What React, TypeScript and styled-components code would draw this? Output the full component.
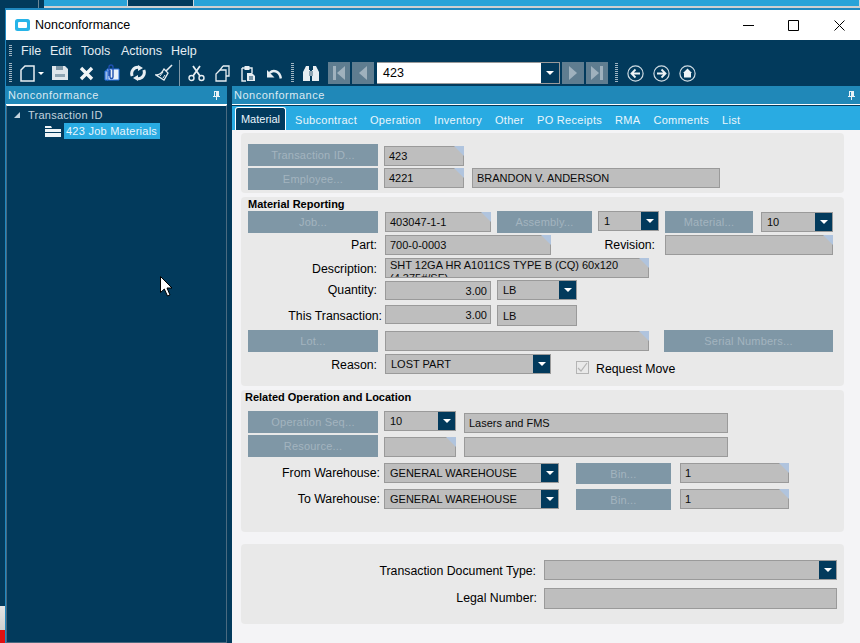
import React from "react";
import styled, { createGlobalStyle } from "styled-components";

const GlobalStyle = createGlobalStyle`
  html, body {
    margin: 0;
    padding: 0;
    background: #fff;
    font-family: "Liberation Sans", Arial, sans-serif;
    overflow: hidden;
  }
`;

const NAVY = "#023a5c";

const Page = styled.div`
  width: 860px;
  height: 643px;
  overflow: hidden;
  display: flex;
  flex-direction: column;
  background: ${NAVY};
`;

// bits of the window behind this one
const BackStrip = styled.div`
  height: 8px;
  display: flex;
  padding-left: 38px;
  flex: none;
`;
const BackTab = styled.div<{ $w?: number; $tone: "line" | "dark" | "blue" }>`
  box-sizing: border-box;
  height: ${(p) => (p.$tone === "line" ? 8 : 6)}px;
  background: ${(p) => (p.$tone === "line" ? "#6d8796" : p.$tone === "dark" ? NAVY : "#29a3d8")};
  width: ${(p) => (p.$w ? `${p.$w}px` : "auto")};
  flex: ${(p) => (p.$w ? "none" : 1)};
  border-right: ${(p) => (p.$tone === "line" ? "none" : "1px solid #cfd8de")};
`;
const BackTabs = styled.div`
  flex: 1;
  display: flex;
  margin-left: 5px;
  height: 8px;
  background: #d0d0d0;
`;

const Body = styled.div`
  flex: 1;
  display: flex;
  min-height: 0;
`;
const BackSide = styled.div`
  width: 5px;
  flex: none;
  display: flex;
  flex-direction: column;
`;
const SideChunk = styled.div<{ $tone: "gray" | "red" }>`
  height: ${(p) => (p.$tone === "gray" ? 24 : 13)}px;
  flex: none;
  background: ${(p) => (p.$tone === "gray" ? "linear-gradient(#e4e4e4, #cfcfcf)" : "#e01010")};
`;
const SideFill = styled.div`
  flex: 1;
  background: ${NAVY};
`;

const Win = styled.div`
  flex: 1;
  display: flex;
  flex-direction: column;
  min-height: 0;
  min-width: 0;
  background: #fff;
  border-left: 1px solid #2088c0;
  border-top: 2px solid #2088c0;
`;

const TitleBar = styled.div`
  height: 30px;
  flex: none;
  display: flex;
  align-items: center;
  padding-left: 9px;
  background: #fff;
  font-size: 12.5px;
  color: #000;
`;
const TitleText = styled.span`
  margin-left: 5px;
  flex: 1;
`;
const WinBtn = styled.div<{ $w: number }>`
  width: ${(p) => p.$w}px;
  height: 30px;
  display: flex;
  align-items: center;
  justify-content: center;
`;

const MenuBar = styled.div`
  height: 20px;
  flex: none;
  box-sizing: border-box;
  padding: 1px 0 0 3px;
  background: ${NAVY};
  display: flex;
  align-items: center;
  font-size: 12.5px;
  color: #e4edf3;
`;
const Grip = styled.div<{ $h: number; $mr: number; $ml?: number }>`
  width: 3px;
  height: ${(p) => p.$h}px;
  margin-right: ${(p) => p.$mr}px;
  margin-left: ${(p) => p.$ml ?? 0}px;
  flex: none;
  background: repeating-linear-gradient(to bottom, #9fb4c2 0 1px, transparent 1px 2px);
`;
const MenuItem = styled.span<{ $w: number }>`
  width: ${(p) => p.$w}px;
`;

const ToolBar = styled.div`
  height: 26px;
  flex: none;
  background: ${NAVY};
  display: flex;
  align-items: center;
  padding-left: 3px;
`;
const ToolIcon = styled.div<{ $w?: number; $mr?: number }>`
  width: ${(p) => p.$w ?? 26}px;
  height: 22px;
  margin-right: ${(p) => p.$mr ?? 0}px;
  flex: none;
  display: flex;
  align-items: center;
  justify-content: center;
`;
const ToolSep = styled.div`
  width: 1px;
  height: 26px;
  background: #7f97a6;
  margin: 0 3px 0 2px;
  flex: none;
`;
const NavBtn = styled.div`
  width: 22px;
  height: 22px;
  margin-right: 2px;
  flex: none;
  background: #5f7d90;
  display: flex;
  align-items: center;
  justify-content: center;
`;
const NavBox = styled.div`
  width: 183px;
  height: 22px;
  box-sizing: border-box;
  margin: 0 2px 0 1px;
  border: 1px solid #9a9a9a;
  border-left: none;
  background: #fff;
  display: flex;
  flex: none;
  font-size: 12.5px;
  color: #000;
  align-items: center;
  padding-left: 6px;
`;
const NavText = styled.span`
  flex: 1;
`;
const NavArrow = styled.div`
  width: 18px;
  height: 20px;
  background: ${NAVY};
  display: flex;
  align-items: center;
  justify-content: center;
`;
const Caret = styled.span<{ $s?: number }>`
  width: 0;
  height: 0;
  border-left: ${(p) => p.$s ?? 4}px solid transparent;
  border-right: ${(p) => p.$s ?? 4}px solid transparent;
  border-top: ${(p) => p.$s ?? 4}px solid #fff;
`;

const Split = styled.div`
  flex: 1;
  display: flex;
  min-height: 0;
  background: ${NAVY};
`;
const LeftPane = styled.div`
  width: 221px;
  flex: none;
  display: flex;
  flex-direction: column;
  position: relative;
`;
const Splitter = styled.div`
  width: 5px;
  flex: none;
  background: ${NAVY};
`;
const RightPane = styled.div`
  flex: 1;
  display: flex;
  flex-direction: column;
  min-width: 0;
`;
const PaneHead = styled.div<{ $pr: number }>`
  height: 19px;
  flex: none;
  box-sizing: border-box;
  background: #2088b8;
  display: flex;
  align-items: center;
  justify-content: space-between;
  padding: 0 ${(p) => p.$pr}px 0 2px;
  font-size: 11px;
  letter-spacing: 0.5px;
  color: #dceaf2;
  border-bottom: 1px solid #fff;
`;
const Tree = styled.div`
  flex: 1;
  background: ${NAVY};
  border: 1px solid #4a6a80;
  border-top-color: #fff;
  padding-top: 1px;
  font-size: 11px;
  letter-spacing: 0.25px;
  color: #c3d3de;
`;
const TreeRow = styled.div<{ $indent: number }>`
  display: flex;
  align-items: center;
  height: 16px;
  padding-left: ${(p) => p.$indent}px;
`;
const TreeArrow = styled.span`
  width: 0;
  height: 0;
  border-left: 6px solid transparent;
  border-bottom: 6px solid #c3d3de;
  margin-right: 8px;
`;
const TreeSelected = styled.span`
  background: #29abe2;
  color: #e8f4fb;
  height: 16px;
  line-height: 16px;
  padding: 0 3px 0 2px;
  margin-left: 3px;
`;
const PointerOverlay = styled.div`
  position: absolute;
  left: 154px;
  top: 190px;
  line-height: 0;
`;

const TabBar = styled.div`
  height: 24px;
  margin-top: 1px;
  flex: none;
  background: #29abe2;
  display: flex;
  align-items: flex-end;
  padding-left: 3px;
  font-size: 11px;
  letter-spacing: 0.3px;
  color: #eaf6fc;
`;
const ActiveTab = styled.div`
  width: 51px;
  height: 23px;
  margin-right: 9px;
  flex: none;
  box-sizing: border-box;
  display: flex;
  align-items: center;
  justify-content: center;
  background: ${NAVY};
  border: 1px solid #fff;
  border-bottom: none;
  border-radius: 3px 3px 0 0;
  letter-spacing: 0;
`;
const Tab = styled.div`
  height: 20px;
  margin-right: 13px;
  padding-bottom: 1px;
  box-sizing: border-box;
  display: flex;
  align-items: center;
`;

const Content = styled.div`
  flex: 1;
  background: #f4f4f6;
  padding: 3px 16px 0 9px;
  display: flex;
  flex-direction: column;
  font-size: 12.3px;
  color: #000;
  min-height: 0;
`;
const Card = styled.div<{ $h: number; $mt: number }>`
  height: ${(p) => p.$h}px;
  margin-top: ${(p) => p.$mt}px;
  flex: none;
  box-sizing: border-box;
  background: #e9e9e9;
  border-radius: 4px;
  padding-left: 7px;
`;
const CardTitle = styled.div<{ $ml?: number }>`
  font-weight: bold;
  font-size: 11px;
  height: 14px;
  line-height: 14px;
  margin-left: ${(p) => p.$ml ?? 0}px;
`;
const Row = styled.div<{ $h: number; $mt?: number }>`
  display: flex;
  align-items: flex-start;
  height: ${(p) => p.$h}px;
  margin-top: ${(p) => p.$mt ?? 0}px;
`;
const ActionBtn = styled.div<{ $w: number; $ml?: number; $h?: number }>`
  width: ${(p) => p.$w}px;
  height: ${(p) => p.$h ?? 22}px;
  margin-left: ${(p) => p.$ml ?? 0}px;
  flex: none;
  background: #7f97a6;
  color: #a3b4bf;
  font-size: 11px;
  letter-spacing: 0.2px;
  display: flex;
  align-items: center;
  justify-content: center;
`;
const Field = styled.div<{
  $w: number;
  $ml?: number;
  $dy?: number;
  $h?: number;
  $corner?: boolean;
  $right?: boolean;
  $pad?: number;
}>`
  position: relative;
  width: ${(p) => p.$w}px;
  height: ${(p) => p.$h ?? 20}px;
  margin-left: ${(p) => p.$ml ?? 0}px;
  margin-top: ${(p) => p.$dy ?? 0}px;
  flex: none;
  box-sizing: border-box;
  background: #bebebe;
  border: 1px solid #9a9a9a;
  display: flex;
  align-items: center;
  justify-content: ${(p) => (p.$right ? "flex-end" : "flex-start")};
  padding: ${(p) => (p.$right ? "0 3px 0 0" : `0 0 0 ${p.$pad ?? 4}px`)};
  font-size: 11px;
  color: #0a0a0a;
  white-space: nowrap;
  &::after {
    content: "";
    display: ${(p) => (p.$corner ? "block" : "none")};
    position: absolute;
    top: -1px;
    right: -1px;
    width: 10px;
    height: 10px;
    background: #b0c4de;
    clip-path: polygon(0 0, 100% 0, 100% 100%);
  }
`;
const ClippedText = styled.div`
  height: 18px;
  overflow: hidden;
  white-space: normal;
  line-height: 12.5px;
  align-self: flex-start;
`;
const FieldText = styled.span`
  flex: 1;
`;
const ComboBtn = styled.div`
  width: 17px;
  height: 18px;
  flex: none;
  background: ${NAVY};
  display: flex;
  align-items: center;
  justify-content: center;
`;
const Label = styled.div<{ $w: number; $dy?: number }>`
  width: ${(p) => p.$w}px;
  flex: none;
  text-align: right;
  margin-top: ${(p) => p.$dy ?? 2}px;
  line-height: 16px;
  white-space: nowrap;
`;
const CheckBox = styled.div`
  width: 11px;
  height: 11px;
  margin: 7px 0 0 25px;
  border: 1px solid #b4b4b4;
  flex: none;
  display: flex;
  align-items: center;
  justify-content: center;
`;
const CheckLabel = styled.div`
  margin: 7px 0 0 7px;
  line-height: 16px;
`;

const W = "#e8eef2";

const NewIcon = () => (
  <svg width="15" height="17" viewBox="0 0 15 17">
    <path d="M5 1h9v15H1V5z" fill="none" stroke={W} strokeWidth="1.5" />
  </svg>
);
const SaveIcon = () => (
  <svg width="16" height="16" viewBox="0 0 16 16">
    <path d="M0 1h13l3 3v11H0z" fill="#dfe6eb" />
    <path d="M4 1h7v4H4z" fill="#7f97a6" />
    <path d="M3 9h10v3H3z" fill="#8fa5b3" />
  </svg>
);
const CloseIcon = () => (
  <svg width="15" height="15" viewBox="0 0 15 15">
    <path d="M2 2l11 11M13 2L2 13" stroke="#f0f4f6" strokeWidth="3.4" />
  </svg>
);
const ActionsIcon = () => (
  <svg width="16" height="18" viewBox="0 0 16 18">
    <path d="M3 5h12v11H3z" fill="#e9f0fa" stroke="#2a72e4" />
    <path d="M1 7h3v9H1z" fill="#9bb9e4" stroke="#2a72e4" />
    <path d="M5 12V3a2 2 0 0 1 4 0v10a1.5 1.5 0 0 1-3 0V6" fill="none" stroke="#1f4fb0" strokeWidth="1.4" />
  </svg>
);
const RefreshIcon = () => (
  <svg width="16" height="16" viewBox="0 0 16 16">
    <path d="M2.2 11A6.2 6.2 0 0 1 8.500 2.400" fill="none" stroke={W} strokeWidth="3" />
    <path d="M13.800 5A6.200 6.200 0 0 1 7.500 13.600" fill="none" stroke={W} strokeWidth="3" />
    <path d="M8 0l5 3-5 3zM8 10v6l-5-3z" fill={W} />
  </svg>
);
const BroomIcon = () => (
  <svg width="18" height="18" viewBox="0 0 18 18">
    <path d="M17 1l-6 6" stroke={W} strokeWidth="1.6" />
    <path d="M9 5l4 4-4 7-8-5c3 0 6-2 8-6z" fill="none" stroke={W} strokeWidth="1.3" />
    <path d="M5 12l3-4M8 14l2-3" stroke={W} />
  </svg>
);
const CutIcon = () => (
  <svg width="17" height="17" viewBox="0 0 17 17">
    <circle cx="3.5" cy="13" r="2.5" fill="none" stroke={W} strokeWidth="1.4" />
    <circle cx="13.5" cy="13" r="2.5" fill="none" stroke={W} strokeWidth="1.4" />
    <path d="M5 11L12 1M12 11L5 1" stroke={W} strokeWidth="1.8" />
  </svg>
);
const CopyIcon = () => (
  <svg width="15" height="17" viewBox="0 0 15 17">
    <path d="M8 1h6v10H11" fill="none" stroke={W} strokeWidth="1.3" />
    <path d="M5 5h6v11H1V9z" fill="none" stroke={W} strokeWidth="1.3" />
    <path d="M8 1L5 5" stroke={W} strokeWidth="1.3" />
  </svg>
);
const PasteIcon = () => (
  <svg width="15" height="17" viewBox="0 0 15 17">
    <path d="M1 3h10v5M5 16H1V3" fill="none" stroke={W} strokeWidth="1.4" />
    <path d="M3.5 1h5v4h-5z" fill={W} />
    <path d="M6 8h5l3 3v5H6z" fill={W} />
    <path d="M8 12h4M8 14h4" stroke={NAVY} />
  </svg>
);
const UndoIcon = () => (
  <svg width="16" height="12" viewBox="0 0 16 12">
    <path d="M14.800 11.500C14 5 8 1.500 3.500 6" fill="none" stroke={W} strokeWidth="2.4" />
    <path d="M1 3v7.500h7.500z" fill={W} />
  </svg>
);
const BinocIcon = () => (
  <svg width="16" height="15" viewBox="0 0 16 15">
    <path d="M3 0h3v4h1v11H0V6zM13 0h-3v4H9v11h7V6z" fill={W} />
    <path d="M6 5h4v5H6z" fill="#8fa5b3" />
  </svg>
);
const NavGlyph = ({ dir, bar }: { dir: "l" | "r"; bar?: boolean }) => (
  <svg width="14" height="14" viewBox="0 0 14 14">
    {dir === "l" ? (
      <>
        {bar && <path d="M1 0h3v14H1z" fill="#9fb1bd" />}
        <path d={bar ? "M13 0v14L5 7z" : "M11 0v14L3 7z"} fill="#9fb1bd" />
      </>
    ) : (
      <>
        {bar && <path d="M10 0h3v14h-3z" fill="#9fb1bd" />}
        <path d={bar ? "M1 0v14l8-7z" : "M3 0v14l8-7z"} fill="#9fb1bd" />
      </>
    )}
  </svg>
);
const CircleArrow = ({ flip }: { flip?: boolean }) => (
  <svg width="17" height="17" viewBox="0 0 17 17" style={flip ? { transform: "scaleX(-1)" } : undefined}>
    <circle cx="8.500" cy="8.500" r="7.600" fill="none" stroke="#cfdbe3" strokeWidth="1.2" />
    <path d="M13 8.500H5M8.500 4.500l-4 4 4 4" fill="none" stroke="#eef3f6" strokeWidth="1.800" />
  </svg>
);
const HomeIcon = () => (
  <svg width="17" height="17" viewBox="0 0 17 17">
    <circle cx="8.500" cy="8.500" r="7.600" fill="none" stroke="#cfdbe3" strokeWidth="1.2" />
    <path d="M8.500 3.500L13 8h-1v4.500H5V8H4z" fill="#eef3f6" />
  </svg>
);
const PinIcon = () => (
  <svg width="7" height="9" viewBox="0 0 7 9">
    <path d="M1 0h5v5h1v1H4v3H3V6H0V5h1zM2 1v4h1V1z" fill="#e8f2f7" />
  </svg>
);
const AppLogo = () => (
  <svg width="15" height="12" viewBox="0 0 15 12">
    <rect width="15" height="12" rx="2.500" fill="#27b4e8" />
    <rect x="3" y="3" width="9" height="6" rx="1" fill="#fff" />
  </svg>
);
const FolderIcon = () => (
  <svg width="16" height="11" viewBox="0 0 16 11">
    <path d="M0 2V0h6l1 2z" fill="#eef3f6" />
    <path d="M0 3h16v3H0zM0 7h16v4H0z" fill="#eef3f6" />
  </svg>
);
const Pointer = () => (
  <svg width="13" height="22" viewBox="0 0 13 22">
    <path d="M.5.500V16.500L4.300 13l3.200 7 2.500-1-3-7H12z" fill="#fff" stroke="#000" />
  </svg>
);
const MinimizeGlyph = () => (
  <svg width="11" height="11" viewBox="0 0 11 11">
    <path d="M0 5.500h11" stroke="#000" />
  </svg>
);
const MaximizeGlyph = () => (
  <svg width="11" height="11" viewBox="0 0 11 11">
    <path d="M.5.500h10v10H.5z" fill="none" stroke="#000" />
  </svg>
);
const CloseGlyph = () => (
  <svg width="11" height="11" viewBox="0 0 11 11">
    <path d="M.5.500l10 10M10.500.500l-10 10" stroke="#000" />
  </svg>
);

const Combo = ({ children, ...rest }: React.ComponentProps<typeof Field>) => (
  <Field $pad={5} {...rest}>
    <FieldText>{children}</FieldText>
    <ComboBtn>
      <Caret />
    </ComboBtn>
  </Field>
);

const tabs = ["Subcontract", "Operation", "Inventory", "Other", "PO Receipts", "RMA", "Comments", "List"];

export default function App() {
  return (
    <Page>
      <GlobalStyle />
      <BackStrip>
        <BackTab $w={1} $tone="line" />
        <BackTabs>
          <BackTab $w={84} $tone="blue" />
          <BackTab $w={66} $tone="dark" />
          <BackTab $tone="blue" />
        </BackTabs>
      </BackStrip>
      <Body>
        <BackSide>
          <SideFill />
          <SideChunk $tone="gray" />
          <SideChunk $tone="red" />
        </BackSide>
        <Win>
          <TitleBar>
            <AppLogo />
            <TitleText>Nonconformance</TitleText>
            <WinBtn $w={40}><MinimizeGlyph /></WinBtn>
            <WinBtn $w={50}><MaximizeGlyph /></WinBtn>
            <WinBtn $w={42}><CloseGlyph /></WinBtn>
          </TitleBar>
          <MenuBar>
            <Grip $h={12} $mr={9} />
            <MenuItem $w={29}>File</MenuItem>
            <MenuItem $w={31}>Edit</MenuItem>
            <MenuItem $w={40}>Tools</MenuItem>
            <MenuItem $w={50}>Actions</MenuItem>
            <MenuItem $w={30}>Help</MenuItem>
          </MenuBar>
          <ToolBar>
            <Grip $h={20} $mr={8} />
            <ToolIcon $w={15}><NewIcon /></ToolIcon>
            <ToolIcon $w={12}><Caret $s={3} /></ToolIcon>
            <ToolIcon><SaveIcon /></ToolIcon>
            <ToolIcon><CloseIcon /></ToolIcon>
            <ToolIcon><ActionsIcon /></ToolIcon>
            <ToolIcon><RefreshIcon /></ToolIcon>
            <ToolIcon><BroomIcon /></ToolIcon>
            <ToolSep />
            <ToolIcon><CutIcon /></ToolIcon>
            <ToolIcon><CopyIcon /></ToolIcon>
            <ToolIcon><PasteIcon /></ToolIcon>
            <ToolIcon><UndoIcon /></ToolIcon>
            <Grip $h={20} $mr={4} $ml={4} />
            <ToolIcon $mr={4}><BinocIcon /></ToolIcon>
            <NavBtn><NavGlyph dir="l" bar /></NavBtn>
            <NavBtn><NavGlyph dir="l" /></NavBtn>
            <NavBox>
              <NavText>423</NavText>
              <NavArrow><Caret /></NavArrow>
            </NavBox>
            <NavBtn><NavGlyph dir="r" /></NavBtn>
            <NavBtn><NavGlyph dir="r" bar /></NavBtn>
            <Grip $h={20} $mr={4} $ml={5} />
            <ToolIcon><CircleArrow /></ToolIcon>
            <ToolIcon><CircleArrow flip /></ToolIcon>
            <ToolIcon><HomeIcon /></ToolIcon>
          </ToolBar>
          <Split>
            <LeftPane>
              <PaneHead $pr={7}>
                Nonconformance
                <PinIcon />
              </PaneHead>
              <Tree>
                <TreeRow $indent={7}>
                  <TreeArrow />
                  Transaction ID
                </TreeRow>
                <TreeRow $indent={38}>
                  <FolderIcon />
                  <TreeSelected>423 Job Materials</TreeSelected>
                </TreeRow>
              </Tree>
              <PointerOverlay>
                <Pointer />
              </PointerOverlay>
            </LeftPane>
            <Splitter />
            <RightPane>
              <PaneHead $pr={5}>
                Nonconformance
                <PinIcon />
              </PaneHead>
              <TabBar>
                <ActiveTab>Material</ActiveTab>
                {tabs.map((t) => (
                  <Tab key={t}>{t}</Tab>
                ))}
              </TabBar>
              <Content>
                <Card $h={60} $mt={0}>
                  <Row $h={24} $mt={11}>
                    <ActionBtn $w={130}>Transaction ID...</ActionBtn>
                    <Field $w={80} $ml={6} $dy={2} $corner>423</Field>
                  </Row>
                  <Row $h={22}>
                    <ActionBtn $w={130}>Employee...</ActionBtn>
                    <Field $w={80} $ml={6} $corner>4221</Field>
                    <Field $w={248} $ml={8}>BRANDON V. ANDERSON</Field>
                  </Row>
                </Card>
                <Card $h={189} $mt={4}>
                  <CardTitle>Material Reporting</CardTitle>
                  <Row $h={24}>
                    <ActionBtn $w={130}>Job...</ActionBtn>
                    <Field $w={106} $ml={7} $dy={1} $corner>403047-1-1</Field>
                    <ActionBtn $w={95} $ml={6}>Assembly...</ActionBtn>
                    <Combo $w={61} $ml={6}>1</Combo>
                    <ActionBtn $w={88} $ml={6}>Material...</ActionBtn>
                    <Combo $w={72} $ml={8} $dy={1}>10</Combo>
                  </Row>
                  <Row $h={23}>
                    <Label $w={129}>Part:</Label>
                    <Field $w={166} $ml={8} $corner>700-0-0003</Field>
                    <Label $w={104}>Revision:</Label>
                    <Field $w={168} $ml={10} $corner />
                  </Row>
                  <Row $h={23}>
                    <Label $w={129} $dy={3}>Description:</Label>
                    <Field $w={264} $ml={8} $corner>
                      <ClippedText>SHT 12GA HR A1011CS TYPE B (CQ) 60x120 (4.375#/SF)</ClippedText>
                    </Field>
                  </Row>
                  <Row $h={25}>
                    <Label $w={129} $dy={1}>Quantity:</Label>
                    <Field $w={106} $ml={8} $h={19} $right>3.00</Field>
                    <Combo $w={80} $ml={6} $dy={-1}>LB</Combo>
                  </Row>
                  <Row $h={24}>
                    <Label $w={134} $dy={2}>This Transaction:</Label>
                    <Field $w={106} $ml={3} $dy={-1} $h={19} $right>3.00</Field>
                    <Field $w={80} $ml={6} $dy={-1} $h={21} $pad={5}>LB</Field>
                  </Row>
                  <Row $h={24}>
                    <ActionBtn $w={130}>Lot...</ActionBtn>
                    <Field $w={264} $ml={7} $dy={1} $corner />
                    <ActionBtn $w={169} $ml={15}>Serial Numbers...</ActionBtn>
                  </Row>
                  <Row $h={24}>
                    <Label $w={129} $dy={3}>Reason:</Label>
                    <Combo $w={166} $ml={8}>LOST PART</Combo>
                    <CheckBox>
                      <svg width="11" height="11" viewBox="0 0 11 11">
                        <path d="M1 6l3 3 6-8" fill="none" stroke="#b4b4b4" strokeWidth="1.2" />
                      </svg>
                    </CheckBox>
                    <CheckLabel>Request Move</CheckLabel>
                  </Row>
                </Card>
                <Card $h={142} $mt={4}>
                  <CardTitle $ml={-3}>Related Operation and Location</CardTitle>
                  <Row $h={24} $mt={7}>
                    <ActionBtn $w={130}>Operation Seq...</ActionBtn>
                    <Combo $w={72} $ml={6}>10</Combo>
                    <Field $w={264} $ml={8} $dy={2}>Lasers and FMS</Field>
                  </Row>
                  <Row $h={28}>
                    <ActionBtn $w={130}>Resource...</ActionBtn>
                    <Field $w={72} $ml={6} $dy={2} $corner />
                    <Field $w={264} $ml={8} $dy={2} />
                  </Row>
                  <Row $h={26}>
                    <Label $w={132}>From Warehouse:</Label>
                    <Combo $w={175} $ml={4}>GENERAL WAREHOUSE</Combo>
                    <ActionBtn $w={95} $ml={17} $h={21}>Bin...</ActionBtn>
                    <Field $w={109} $ml={9} $corner>1</Field>
                  </Row>
                  <Row $h={26}>
                    <Label $w={132}>To Warehouse:</Label>
                    <Combo $w={175} $ml={4}>GENERAL WAREHOUSE</Combo>
                    <ActionBtn $w={95} $ml={17} $h={21}>Bin...</ActionBtn>
                    <Field $w={109} $ml={9} $corner>1</Field>
                  </Row>
                </Card>
                <Card $h={80} $mt={12}>
                  <Row $h={28} $mt={16}>
                    <Label $w={288} $dy={3}>Transaction Document Type:</Label>
                    <Combo $w={293} $ml={8} />
                  </Row>
                  <Row $h={21}>
                    <Label $w={289}>Legal Number:</Label>
                    <Field $w={293} $ml={7} $h={21} />
                  </Row>
                </Card>
              </Content>
            </RightPane>
          </Split>
        </Win>
      </Body>
    </Page>
  );
}
